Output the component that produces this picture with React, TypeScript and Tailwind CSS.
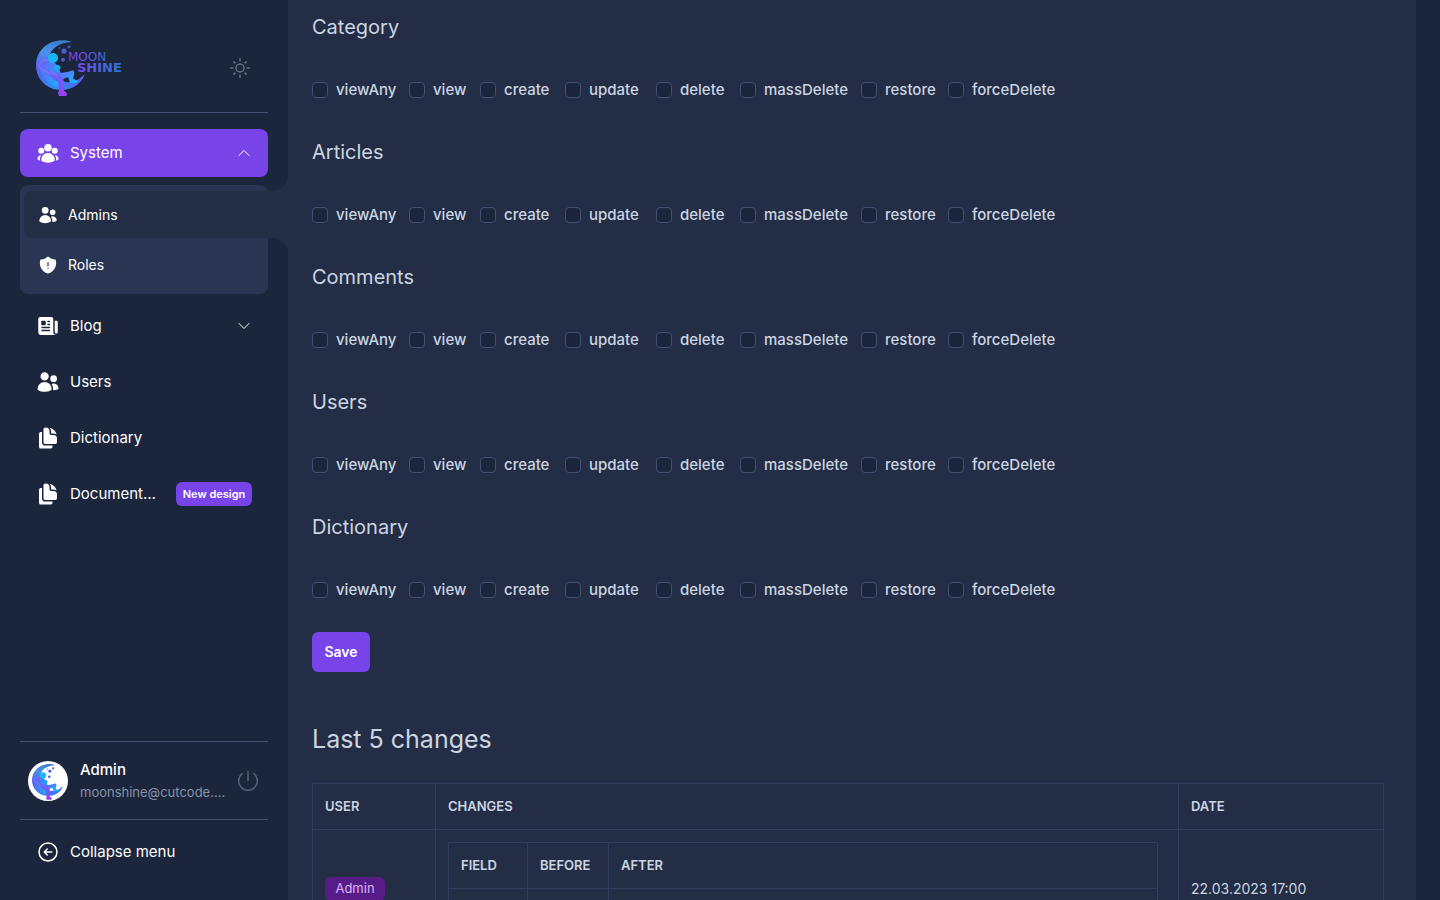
import { useState } from "react";
import type { ReactNode } from "react";
import {
  HiDocumentDuplicate,
  HiNewspaper,
  HiShieldExclamation,
  HiUserGroup,
  HiUsers,
  HiOutlineArrowLeftCircle,
  HiOutlineChevronDown,
  HiOutlineChevronUp,
} from "react-icons/hi2";

const abilities = ["viewAny", "view", "create", "update", "delete", "massDelete", "restore", "forceDelete"];
const resources = ["Category", "Articles", "Comments", "Users", "Dictionary"];

function MoonShape({ id }: { id: string }) {
  return (
    <>
      <defs>
        <linearGradient id={`${id}-moon`} x1="0.7" y1="0" x2="0.4" y2="1">
          <stop offset="0" stopColor="#3576c4" />
          <stop offset="0.35" stopColor="#4a93ea" />
          <stop offset="0.7" stopColor="#5a5ff0" />
          <stop offset="1" stopColor="#2f8cf5" />
        </linearGradient>
        <linearGradient id={`${id}-body`} x1="0" y1="0" x2="1" y2="0.6">
          <stop offset="0" stopColor="#6a62f5" />
          <stop offset="0.5" stopColor="#4f7cf8" />
          <stop offset="1" stopColor="#16b4ff" />
        </linearGradient>
        <linearGradient id={`${id}-leg`} x1="0" y1="0" x2="0" y2="1">
          <stop offset="0" stopColor="#5a6cf5" />
          <stop offset="0.4" stopColor="#6b5cf5" />
          <stop offset="1" stopColor="#a03df0" />
        </linearGradient>
      </defs>
      <path
        d="M36 2C32 0 27 0 23 .4C9 2 0 13 0 25.500C0 39 11 50 25 50C37 50 46 43 48.700 34C44 39 38 43.500 30 42C18 39 12 28 13 17C15 8 24 2.500 36 2Z"
        fill={`url(#${id}-moon)`}
      />
      <path d="M14 17C7 18 2 23 3 28C5 36 12 44 20 47L27 41L22.500 27Z" fill={`url(#${id}-body)`} />
      <path
        d="M17 30C22 34 29 33 36 30.500C38 30 38.500 31.500 38.200 34L37 38.500L42 41L41 43L34 43L32 37L25 40Z"
        fill={`url(#${id}-body)`}
      />
      <path
        d="M11 30C17 34 25 34 27 38C28.500 42 27.500 47 28 51C31 52 32 54.500 30 56H23L22 53C24 50 23 46 22 42C18 40 13 36 11 30Z"
        fill={`url(#${id}-leg)`}
      />
      <path d="M12 20C5 20 1 25 4 28C8 31 15 34 22 35" fill="none" stroke="#b36cf5" strokeWidth="0.8" />
      <circle cx="17" cy="18" r="5" fill="#18b9f2" />
      <ellipse cx="21.500" cy="27.500" rx="3" ry="2.600" fill="#19a9f5" />
      <circle cx="28" cy="11" r="2.600" fill="#4f5fd4" />
      <circle cx="33" cy="6.800" r="1.600" fill="#3f58b8" />
      <circle cx="27" cy="19.800" r="2" fill="#4a5ccc" />
      <circle cx="23.500" cy="8" r="1" fill="#3f58b8" />
    </>
  );
}

function Logo() {
  return (
    <svg width="92" height="57" viewBox="0 0 92 57" role="img" aria-label="MoonShine">
      <MoonShape id="logo" />
      <defs>
        <linearGradient id="word" gradientUnits="userSpaceOnUse" x1="34" y1="0" x2="88" y2="0">
          <stop offset="0" stopColor="#8a3df0" />
          <stop offset="0.5" stopColor="#4f62e0" />
          <stop offset="1" stopColor="#2b76cc" />
        </linearGradient>
      </defs>
      <g fill="url(#word)" className="font-['DejaVu_Sans',sans-serif]">
        <text x="32" y="21" fontSize="12">MOON</text>
        <text x="41" y="32" fontSize="13" fontWeight="700">SHINE</text>
      </g>
    </svg>
  );
}

function SunIcon() {
  return (
    <svg width="24" height="24" viewBox="0 0 24 24" fill="none" stroke="currentColor" strokeWidth="1.500" strokeLinecap="round" aria-hidden="true">
      <circle cx="12" cy="12" r="4" />
      <path d="M12 2.800V5M12 19v2.200M2.800 12H5M19 12h2.200M5.700 5.700l1.200 1.200M17.100 17.100l1.200 1.200M5.700 18.300l1.200-1.200M17.100 6.900l1.200-1.200" />
    </svg>
  );
}

function PowerIcon() {
  return (
    <svg width="24" height="24" viewBox="0 0 24 24" fill="none" stroke="currentColor" strokeWidth="1.500" strokeLinecap="round" aria-hidden="true">
      <path d="M12 2.500v9M6.200 4.600a9.300 9.300 0 1 0 11.600 0" />
    </svg>
  );
}

function NavLink({ icon, label, children }: { icon: ReactNode; label: string; children?: ReactNode }) {
  return (
    <a href="#" className="flex h-12 items-center gap-2.5 px-4 text-[15px] text-white">
      <span className="shrink-0 text-2xl">{icon}</span>
      <span className="min-w-0 flex-1 truncate">{label}</span>
      {children}
    </a>
  );
}

function Sidebar() {
  const [open, setOpen] = useState(true);
  return (
    <aside className="flex h-full w-72 shrink-0 flex-col px-5 pb-6 pt-10">
      <div className="flex h-[73px] items-start justify-between border-b border-[#415172] pl-4 pr-4">
        <a href="#" aria-label="Home">
          <Logo />
        </a>
        <button type="button" aria-label="Toggle theme" className="mt-4 text-[#667085]">
          <SunIcon />
        </button>
      </div>

      <nav className="mt-4 flex flex-1 flex-col gap-2">
        <button
          type="button"
          onClick={() => setOpen(!open)}
          className="flex h-12 items-center gap-2.5 rounded-lg bg-[#7843e9] px-4 text-left text-[15px] text-white"
        >
          <HiUserGroup className="shrink-0 text-2xl" />
          <span className="flex-1">System</span>
          {open ? <HiOutlineChevronUp className="size-4" /> : <HiOutlineChevronDown className="size-4" />}
        </button>

        {open && (
          <ul className="flex flex-col gap-1 rounded-lg bg-[#293552] pb-1.5 pl-1 pt-1.5 text-sm text-white">
            <li className="relative -mr-5">
              <span className="absolute -top-4 right-0 size-4 bg-[#232d45]">
                <span className="block size-4 rounded-br-2xl bg-[#1b253b]" />
              </span>
              <a href="#" className="flex h-[47px] items-center gap-2.5 rounded-l-lg bg-[#232d45] px-3.5">
                <HiUsers className="text-xl" />
                Admins
              </a>
              <span className="absolute -bottom-4 right-0 size-4 bg-[#232d45]">
                <span className="block size-4 rounded-tr-2xl bg-[#1b253b]" />
              </span>
            </li>
            <li>
              <a href="#" className="flex h-[46px] items-center gap-2.5 px-3.5">
                <HiShieldExclamation className="text-xl" />
                Roles
              </a>
            </li>
          </ul>
        )}

        <NavLink icon={<HiNewspaper />} label="Blog">
          <HiOutlineChevronDown className="size-4" />
        </NavLink>
        <NavLink icon={<HiUsers />} label="Users" />
        <NavLink icon={<HiDocumentDuplicate />} label="Dictionary" />
        <NavLink icon={<HiDocumentDuplicate />} label="Documentation">
          <span className="ml-2 flex h-6 w-[76px] items-center justify-center whitespace-nowrap rounded-md bg-[#7843e9] text-[11px] font-semibold">
            New design
          </span>
        </NavLink>
      </nav>

      <div className="flex h-[79px] items-center border-y border-[#415172] px-2">
        <svg width="40" height="40" viewBox="0 0 40 40" role="img" aria-label="Admin avatar" className="mr-3 shrink-0">
          <circle cx="20" cy="20" r="20" fill="#fff" />
          <g transform="translate(4 3) scale(0.64)">
            <MoonShape id="avatar" />
          </g>
        </svg>
        <div className="mr-1 min-w-0 flex-1 pb-0.5">
          <div className="truncate text-[15px] leading-6 font-medium text-white">Admin</div>
          <div className="truncate text-[13px] leading-5 text-[#8492ab]">moonshine@cutcode.dev</div>
        </div>
        <button type="button" aria-label="Log out" className="text-[#556076]">
          <PowerIcon />
        </button>
      </div>

      <button type="button" className="mt-2 flex h-12 items-center gap-2.5 px-4 text-[15px] text-white">
        <HiOutlineArrowLeftCircle className="text-2xl" />
        Collapse menu
      </button>
    </aside>
  );
}

function Permissions({ name }: { name: string }) {
  return (
    <section>
      <h2 className="text-xl leading-[30px]">{name}</h2>
      <div className="mt-9 grid grid-cols-[97px_71px_85px_91px_84px_121px_87px_104px] text-[15px] font-medium">
        {abilities.map((ability) => (
          <label key={ability} className="flex h-6 items-center gap-2">
            <input
              type="checkbox"
              name={`${name}[${ability}]`}
              className="size-4 shrink-0 appearance-none rounded border border-[#415172] bg-[#1b253b] checked:bg-[#7843e9]"
            />
            {ability}
          </label>
        ))}
      </div>
    </section>
  );
}

const head = "h-[46px] border border-[#303d5d] px-3 text-left text-[13px] font-semibold uppercase";
const cell = "border border-[#303d5d] p-3";

export default function App() {
  return (
    <div className="flex h-screen overflow-hidden bg-[#1b253b] pr-6 font-[Inter,sans-serif]">
      <Sidebar />
      <main className="min-w-0 flex-1 overflow-y-auto bg-[#232d45] px-6 pb-8 pt-3 text-[#cbd5e1] [scrollbar-width:none]">
        <form onSubmit={(event) => event.preventDefault()}>
          <div className="flex flex-col gap-[35px]">
            {resources.map((name) => (
              <Permissions key={name} name={name} />
            ))}
          </div>
          <button type="submit" className="mt-[30px] h-10 w-[58px] rounded-md bg-[#7843e9] text-sm font-semibold text-white">
            Save
          </button>
        </form>

        <h1 className="mt-12 text-[25px] leading-[39px]">Last 5 changes</h1>
        <div className="mt-6 pr-2">
          <table className="w-full border-collapse">
            <thead>
              <tr>
                <th className={`${head} w-[123px]`}>User</th>
                <th className={head}>Changes</th>
                <th className={`${head} w-[205px]`}>Date</th>
              </tr>
            </thead>
            <tbody>
              <tr>
                <td className={cell}>
                  <span className="flex h-6 w-[60px] items-center justify-center rounded-md bg-[#581c87] text-[13px] text-[#d8b4fe]">
                    Admin
                  </span>
                </td>
                <td className={`${cell} pr-5`}>
                  <table className="w-full border-collapse">
                    <thead>
                      <tr>
                        <th className={`${head} w-[79px]`}>Field</th>
                        <th className={`${head} w-[81px]`}>Before</th>
                        <th className={head}>After</th>
                      </tr>
                    </thead>
                    <tbody>
                      <tr>
                        <td className={`${cell} h-[46px]`} />
                        <td className={cell} />
                        <td className={cell} />
                      </tr>
                    </tbody>
                  </table>
                </td>
                <td className={`${cell} text-sm`}>22.03.2023 17:00</td>
              </tr>
            </tbody>
          </table>
        </div>
      </main>
    </div>
  );
}
